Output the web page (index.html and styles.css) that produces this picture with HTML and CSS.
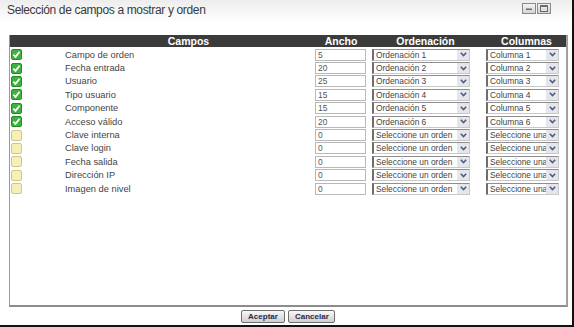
FILE: index.html
```html
<!DOCTYPE html>
<html lang="es">
<head>
    <meta charset="UTF-8">
    <title>Selección de campos</title>
    <link rel="stylesheet" href="styles.css">
</head>
<body>
    <div class="window">
        <div class="titlebar">
            <h1>Selección de campos a mostrar y orden</h1>
            <div class="win-buttons">
                <span class="win-btn"><svg width="8" height="6" viewBox="0 0 8 6"><rect x="1" y="2.5" width="6" height="1.5" fill="#6a6a6a"/></svg></span>
                <span class="win-btn"><svg width="8" height="7" viewBox="0 0 8 7"><rect x="0.5" y="0.5" width="7" height="6" fill="none" stroke="#6a6a6a"/><rect x="0.5" y="0.5" width="7" height="1.5" fill="#6a6a6a"/></svg></span>
            </div>
        </div>

        <div class="panel">
            <div class="row head">
                <span></span>
                <span>Campos</span>
                <span>Ancho</span>
                <span>Ordenación</span>
                <span class="h-col">Columnas</span>
            </div>
            <div id="rows"></div>
        </div>

        <div class="actions">
            <button class="btn">Aceptar</button>
            <button class="btn">Cancelar</button>
        </div>
    </div>

    <script>
        const fields = [
            ["Campo de orden", 5, "Ordenación 1", "Columna 1", true],
            ["Fecha entrada", 20, "Ordenación 2", "Columna 2", true],
            ["Usuario", 25, "Ordenación 3", "Columna 3", true],
            ["Tipo usuario", 15, "Ordenación 4", "Columna 4", true],
            ["Componente", 15, "Ordenación 5", "Columna 5", true],
            ["Acceso válido", 20, "Ordenación 6", "Columna 6", true],
            ["Clave interna", 0, "Seleccione un orden", "Seleccione una columna", false],
            ["Clave login", 0, "Seleccione un orden", "Seleccione una columna", false],
            ["Fecha salida", 0, "Seleccione un orden", "Seleccione una columna", false],
            ["Dirección IP", 0, "Seleccione un orden", "Seleccione una columna", false],
            ["Imagen de nivel", 0, "Seleccione un orden", "Seleccione una columna", false]
        ]

        const arrow = `<span class="arrow"><svg width="7" height="5" viewBox="0 0 7 5"><path d="M0.8 0.8 L3.5 3.6 L6.2 0.8" fill="none" stroke="#4a5a80" stroke-width="1.5"/></svg></span>`

        const checked = `<svg width="11" height="11" viewBox="0 0 11 11"><rect x="0.5" y="0.5" width="10" height="10" rx="1.5" fill="#3cb33c" stroke="#278a27"/><path d="M2.4 5.6 L4.5 7.8 L8.6 2.8" fill="none" stroke="#fff" stroke-width="1.8"/></svg>`
        const unchecked = `<svg width="11" height="11" viewBox="0 0 11 11"><rect x="0.5" y="0.5" width="10" height="10" rx="1.5" fill="#f6f0b4" stroke="#cfc68a"/></svg>`

        const rows = document.getElementById("rows")
        fields.forEach(function (f) {
            const row = document.createElement("div")
            row.className = "row"
            row.innerHTML = `
                <span class="check">${f[4] ? checked : unchecked}</span>
                <span class="label">${f[0]}</span>
                <span><span class="input">${f[1]}</span></span>
                <span><span class="select sel-ord"><span class="sel-text">${f[2]}</span>${arrow}</span></span>
                <span><span class="select sel-col"><span class="sel-text">${f[3]}</span>${arrow}</span></span>
            `
            rows.appendChild(row)
        })
    </script>
</body>
</html>
```

FILE: styles.css
```css
* {
    margin: 0;
    padding: 0;
    box-sizing: border-box;
}

body {
    font-family: 'Liberation Sans', Arial, sans-serif;
    background: #fff;
    color: #333;
}

.window {
    width: 574px;
    height: 327px;
    border-right: 2px solid #111;
    border-bottom: 2px solid #111;
    display: flex;
    flex-direction: column;
}

.titlebar {
    height: 35px;
    display: flex;
    justify-content: space-between;
    align-items: flex-start;
    background: linear-gradient(#ededed, #fff 22px);
    padding: 3px 21px 0 7px;
}

.titlebar h1 {
    font-size: 12px;
    font-weight: normal;
    color: #3a3a3a;
    letter-spacing: -0.35px;
}

.win-buttons {
    display: flex;
    gap: 1px;
}

.win-btn {
    width: 14px;
    height: 11px;
    border: 1px solid #8a8a8a;
    background: linear-gradient(#f4f4f4, #d4d4d4);
    display: flex;
    align-items: center;
    justify-content: center;
}

.panel {
    margin-left: 9px;
    width: 559px;
    height: 272px;
    border-left: 1px solid #9a9a9a;
    border-right: 2px solid #a0a0a0;
    border-bottom: 2px solid #8c8c8c;
}

.row {
    display: grid;
    grid-template-columns: 55px 247px 58px 111px 1fr;
    align-items: center;
    height: 13.4px;
    font-size: 9.3px;
    color: #444;
}

.row.head {
    height: 12px;
    background: #3b3b3b;
    color: #fff;
    font-weight: bold;
    font-size: 10.5px;
    text-align: center;
    margin-bottom: 1px;
    line-height: 12px;
}

.h-col {
    padding-left: 6px;
}

.check {
    display: flex;
    padding-left: 1px;
}

.input {
    display: block;
    margin-left: 3px;
    width: 51px;
    height: 12px;
    border: 1px solid #b8b8b8;
    background: #fff;
    font-size: 8.4px;
    line-height: 10px;
    padding-left: 2px;
    color: #555;
}

.select {
    display: flex;
    height: 12px;
    border-top: 1px solid #8e8e8e;
    border-left: 2px solid #6e6e6e;
    border-right: 1px solid #c8c8c8;
    border-bottom: 1px solid #c8c8c8;
    background: #fff;
    overflow: hidden;
}

.sel-ord {
    margin-left: 2px;
    width: 98px;
}

.sel-col {
    margin-left: 5px;
    width: 73px;
}

.sel-text {
    flex: 1;
    font-size: 8.4px;
    line-height: 10px;
    padding-left: 2px;
    white-space: nowrap;
    overflow: hidden;
    color: #444;
}

.arrow {
    width: 12px;
    flex: none;
    background: #e4e6ec;
    display: flex;
    align-items: center;
    justify-content: center;
}

.actions {
    display: flex;
    justify-content: center;
    gap: 3px;
    padding-top: 3px;
    padding-left: 4px;
}

.btn {
    height: 13px;
    padding: 0 6px;
    font-family: 'Liberation Sans', Arial, sans-serif;
    font-size: 8px;
    font-weight: bold;
    color: #2a2a4a;
    border: 1px solid #6e6e6e;
    border-radius: 2px;
    background: linear-gradient(#f8f8f8, #cfcfcf);
}

.btn:first-child {
    width: 44px;
}

.btn:last-child {
    width: 47px;
}
```
